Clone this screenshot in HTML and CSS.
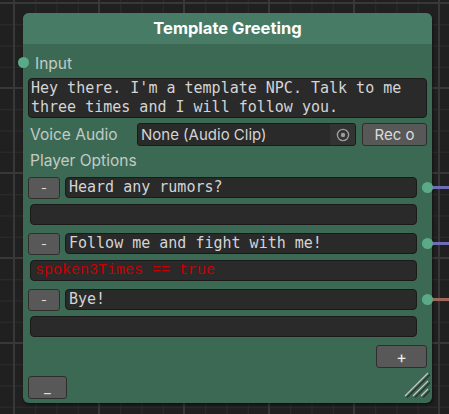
FILE: index.html
```html
<!DOCTYPE html>
<html lang="en">
<head>
  <meta charset="UTF-8" />
  <title>Template Greeting</title>
  <link rel="stylesheet" href="styles.css">
</head>
<body>

  <div class="node">
    <div class="node-title">Template Greeting</div>

    <div class="node-body">
      <div class="port-row">
        <span class="port port-in"></span>
        <span class="label">Input</span>
      </div>

      <div class="field text-area">Hey there. I'm a template NPC. Talk to me<br>three times and I will follow you.</div>

      <div class="prop-row">
        <span class="label">Voice Audio</span>
        <div class="object-field">
          <span class="object-name">None (Audio Clip)</span>
          <span class="picker">
            <svg width="14" height="14" viewBox="0 0 14 14">
              <circle cx="7" cy="7" r="5.6" fill="none" stroke="#9c9c9c" stroke-width="1.4"/>
              <circle cx="7" cy="7" r="2.2" fill="#9c9c9c"/>
            </svg>
          </span>
        </div>
        <button class="btn rec">Rec o</button>
      </div>

      <div class="label section">Player Options</div>

      <div class="option">
        <div class="option-row">
          <button class="btn minus">-</button>
          <div class="field line">Heard any rumors?</div>
          <span class="wire wire-blue"></span>
          <span class="port port-out"></span>
        </div>
        <div class="field line cond"></div>
      </div>

      <div class="option">
        <div class="option-row">
          <button class="btn minus">-</button>
          <div class="field line">Follow me and fight with me!</div>
          <span class="wire wire-blue"></span>
          <span class="port port-out"></span>
        </div>
        <div class="field line cond red">spoken3Times == true</div>
      </div>

      <div class="option">
        <div class="option-row">
          <button class="btn minus">-</button>
          <div class="field line">Bye!</div>
          <span class="wire wire-red"></span>
          <span class="port port-out"></span>
        </div>
        <div class="field line cond"></div>
      </div>

      <div class="add-row">
        <button class="btn add">+</button>
      </div>

      <div class="collapse-row">
        <button class="btn collapse">_</button>
      </div>
    </div>

    <svg class="resize" width="26" height="26" viewBox="0 0 26 26">
      <g stroke="#26352e" stroke-width="1.4">
        <line x1="3" y1="25.5" x2="26" y2="2.5"/>
        <line x1="11" y1="25.5" x2="26" y2="10.5"/>
        <line x1="19" y1="25.5" x2="26" y2="18.5"/>
      </g>
      <g stroke="#c4c4c4" stroke-width="1.2">
        <line x1="1" y1="24" x2="24" y2="1"/>
        <line x1="9" y1="24" x2="24" y2="9"/>
        <line x1="17" y1="24" x2="24" y2="17"/>
      </g>
    </svg>
  </div>

</body>
</html>
```

FILE: styles.css
```css
* {
  box-sizing: border-box;
}

html,
body {
  height: 100%;
}

body {
  margin: 0;
  padding: 13px 0 0 23px;
  overflow: hidden;
  font-family: Inter, 'Noto Sans', sans-serif;
  background-color: #202020;
  background-image:
    linear-gradient(to right, #383838 2px, transparent 2px),
    linear-gradient(to bottom, #383838 2px, transparent 2px),
    linear-gradient(to right, #2d2d2d 1px, transparent 1px),
    linear-gradient(to bottom, #2d2d2d 1px, transparent 1px);
  background-size: 85px 85px, 85px 85px, 21.25px 21.25px, 21.25px 21.25px;
  background-position: 13px 2px, 13px 2px, 14px 3px, 14px 3px;
}

.node {
  position: relative;
  width: 409px;
  height: 390px;
  background: #3c6954;
  border-radius: 6px;
  box-shadow: 1px 2px 3px rgba(0, 0, 0, 0.45);
}

.node-title {
  height: 31px;
  line-height: 31px;
  background: #487b66;
  border-radius: 6px 6px 0 0;
  text-align: center;
  color: #ffffff;
  font-weight: 700;
  font-size: 16.5px;
}

.node-body {
  padding: 0 5px;
}

.label {
  color: #c3cbc6;
  font-size: 15.5px;
  line-height: 20px;
}

/* ports and wires */

.port-row {
  position: relative;
  height: 20px;
  margin: 9px 0 5px;
  padding-left: 7px;
}

.port {
  position: absolute;
  width: 11px;
  height: 11px;
  border-radius: 50%;
  background: #5aaa87;
  z-index: 2;
}

.port-in {
  left: -10px;
  top: 4px;
}

.port-out {
  left: 394px;
  top: 5px;
}

.wire {
  position: absolute;
  left: 404px;
  top: 9px;
  width: 17px;
  height: 3px;
  z-index: 1;
}

.wire-blue {
  background: #6e6eb8;
}

.wire-red {
  background: #a0665c;
}

/* fields */

.field {
  background: #2a2a2a;
  border: 1px solid #1a1a1a;
  border-radius: 4px;
  color: #d4d4d4;
  font-family: 'DejaVu Sans Mono', monospace;
  font-size: 15px;
  white-space: nowrap;
  overflow: hidden;
}

.text-area {
  height: 40px;
  padding: 0 0 0 2px;
  line-height: 19px;
  margin-bottom: 5px;
}

.prop-row {
  display: flex;
  align-items: center;
  height: 23px;
  margin-bottom: 5px;
}

.prop-row .label {
  flex: 1;
  padding-left: 2px;
}

.object-field {
  display: flex;
  width: 219px;
  height: 23px;
  margin-right: 6px;
  background: #2a2a2a;
  border: 1px solid #1a1a1a;
  border-radius: 3px;
  overflow: hidden;
}

.object-name {
  flex: 1;
  padding-left: 3px;
  color: #d4d4d4;
  font-size: 15px;
  line-height: 21px;
}

.picker {
  display: flex;
  align-items: center;
  justify-content: center;
  width: 25px;
  background: #333333;
}

.btn {
  font-family: Inter, 'Noto Sans', sans-serif;
  background: #585858;
  border: 1px solid #2e2e2e;
  border-radius: 3px;
  color: #dcdcdc;
  padding: 0;
  font-size: 15px;
  cursor: pointer;
}

.rec {
  width: 65px;
  height: 23px;
}

.section {
  padding-left: 2px;
  margin-bottom: 6px;
}

/* player options */

.option {
  margin-bottom: 8px;
}

.option-row {
  position: relative;
  display: flex;
  height: 22px;
  margin: 0 10px 5px 0;
}

.minus {
  width: 32px;
  height: 22px;
  margin-right: 5px;
  font-size: 13px;
  line-height: 18px;
}

.line {
  flex: 1;
  height: 21px;
  padding-left: 3px;
  line-height: 19px;
}

.cond {
  margin: 0 10px 0 2px;
}

.red {
  color: #c80000;
  font-family: 'Liberation Mono', monospace;
  padding-left: 4px;
}

.add-row {
  display: flex;
  justify-content: flex-end;
  margin-top: 1px;
}

.add {
  width: 51px;
  height: 23px;
  font-size: 16px;
  color: #f0f0f0;
}

.collapse-row {
  margin-top: 8px;
}

.collapse {
  width: 39px;
  height: 23px;
  line-height: 20px;
}

.resize {
  position: absolute;
  right: 2px;
  bottom: 5px;
}
```
